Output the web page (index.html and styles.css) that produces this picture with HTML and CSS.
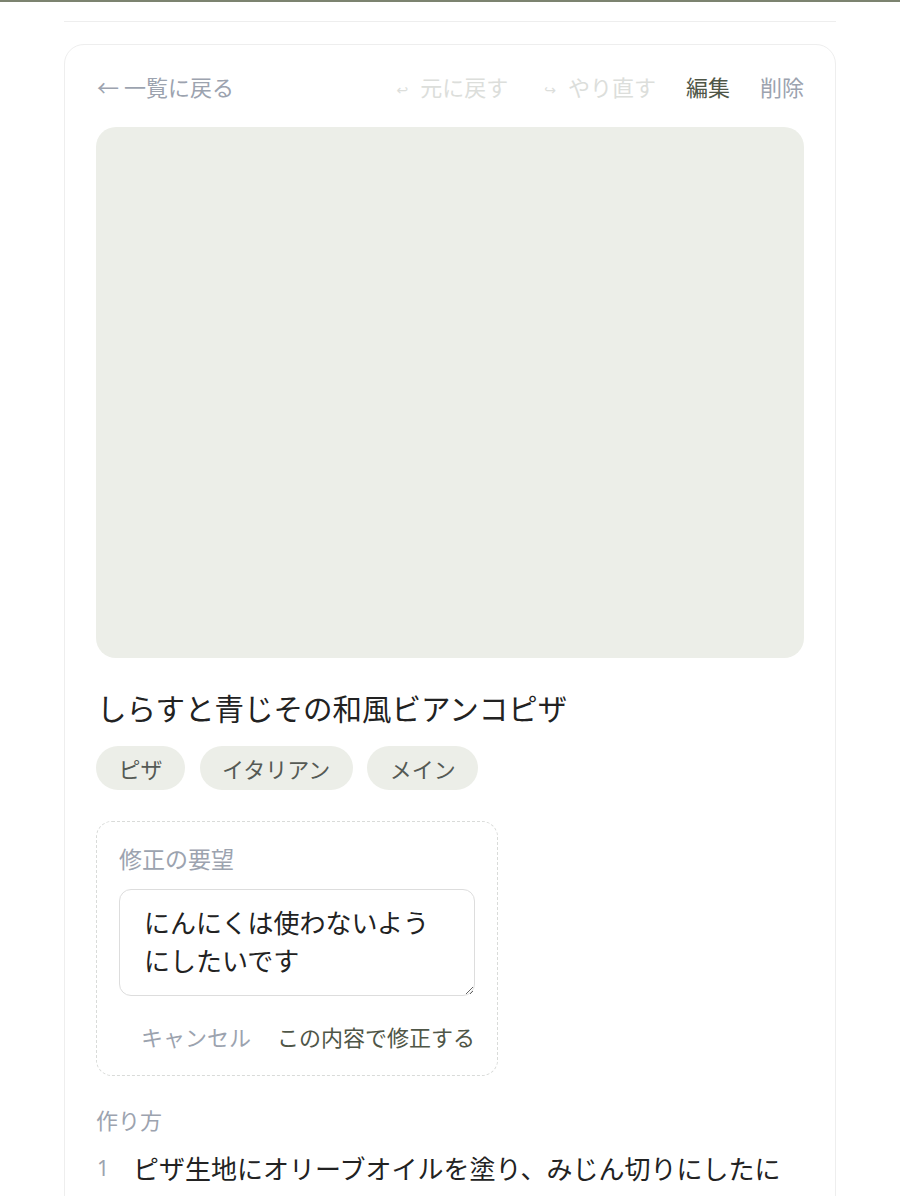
FILE: index.html
```html
<!DOCTYPE html>
<html lang="ja">
<head>
<meta charset="utf-8">
<link rel="stylesheet" href="styles.css">
</head>
<body>
<div class="topbar"></div>
<div class="container">
  <div class="header"></div>
  <main class="card">
    <nav class="nav">
      <a class="back">← 一覧に戻る</a>
      <div class="actions">
        <span class="act disabled"><span class="ico">↩</span>元に戻す</span>
        <span class="act disabled"><span class="ico">↪</span>やり直す</span>
        <span class="act edit">編集</span>
        <span class="act del">削除</span>
      </div>
    </nav>
    <div class="photo"></div>
    <h1 class="title">しらすと青じその和風ビアンコピザ</h1>
    <div class="tags">
      <span class="tag">ピザ</span>
      <span class="tag">イタリアン</span>
      <span class="tag">メイン</span>
    </div>
    <section class="revise">
      <div class="label">修正の要望</div>
      <textarea class="request">にんにくは使わないようにしたいです</textarea>
      <div class="buttons">
        <button class="btn cancel">キャンセル</button>
        <button class="btn submit">この内容で修正する</button>
      </div>
    </section>
    <h2 class="section">作り方</h2>
    <ol class="steps">
      <li class="step"><span class="num">1</span><span class="stext">ピザ生地にオリーブオイルを塗り、みじん切りにしたにんにくを散らす。</span></li>
    </ol>
  </main>
</div>
</body>
</html>
```
FILE: styles.css
```css
* { box-sizing: border-box; }
html, body {
  margin: 0;
  padding: 0;
  background: #ffffff;
  font-family: "Noto Sans CJK JP", "Noto Sans", sans-serif;
  color: #222222;
}
.topbar {
  height: 2px;
  background: #7c8370;
}
.container {
  width: 772px;
  margin: 0 auto;
}
.header {
  height: 20px;
  border-bottom: 1px solid #eeeeee;
}
.card {
  margin-top: 22px;
  border: 1px solid #eeeeee;
  border-radius: 20px;
  padding: 27px 31px 40px;
}
.nav {
  display: flex;
  justify-content: space-between;
  align-items: center;
  height: 28px;
  font-size: 22px;
  line-height: 28px;
  margin-bottom: 27px;
}
.back {
  color: #9ca3af;
  padding-left: 1px;
}
.actions {
  display: flex;
  gap: 30px;
  align-items: center;
}
.act { display: flex; align-items: center; }
.ico {
  font-size: 14px;
  margin-left: 6px;
  margin-right: 12px;
  margin-top: 7px;
  font-family: "DejaVu Sans", sans-serif;
}
.disabled { color: #dcdedb; }
.edit { color: #4f5647; }
.del { color: #9ca3af; }
.photo {
  width: 100%;
  aspect-ratio: 4 / 3;
  background: #eceee8;
  border-radius: 20px;
}
.title {
  margin: 29px 0 0;
  font-size: 29.5px;
  font-weight: 400;
  line-height: 40px;
  padding-left: 1px;
}
.tags {
  display: flex;
  gap: 14.5px;
  margin-top: 19px;
}
.tag {
  height: 44px;
  line-height: 44px;
  padding: 0 22.5px;
  border-radius: 22px;
  background: #eceee8;
  color: #555a55;
  font-size: 22px;
}
.revise {
  width: 402px;
  margin-top: 31px;
  border: 1px dashed #d9dbd9;
  border-radius: 16px;
  padding: 24px 22px 22px;
}
.label {
  font-size: 23px;
  line-height: 24px;
  color: #9ca3af;
}
.request {
  display: block;
  width: 100%;
  height: 107px;
  margin-top: 19px;
  border: 1px solid #dddddd;
  border-radius: 12px;
  padding: 13px 24px;
  font-family: "Noto Sans CJK JP", "Noto Sans", sans-serif;
  font-size: 26px;
  line-height: 38px;
  color: #222222;
  resize: vertical;
  outline: none;
}
.buttons {
  display: flex;
  justify-content: flex-end;
  gap: 26px;
  margin-top: 23px;
}
.btn {
  background: none;
  border: 0;
  padding: 0;
  font-family: "Noto Sans CJK JP", "Noto Sans", sans-serif;
  font-size: 22px;
  line-height: 34px;
}
.cancel { color: #9ca3af; }
.submit { color: #4f5647; }
.section {
  margin: 27px 0 0;
  font-size: 22px;
  line-height: 32px;
  font-weight: 400;
  color: #9ca3af;
}
.steps {
  list-style: none;
  margin: 12px 0 0;
  padding: 0;
}
.step {
  display: flex;
  gap: 24px;
}
.num {
  font-family: "Noto Sans", sans-serif;
  font-size: 21px;
  line-height: 42px;
  color: #9ca3af;
  padding-left: 1px;
}
.stext {
  font-size: 26px;
  line-height: 42px;
}
```
